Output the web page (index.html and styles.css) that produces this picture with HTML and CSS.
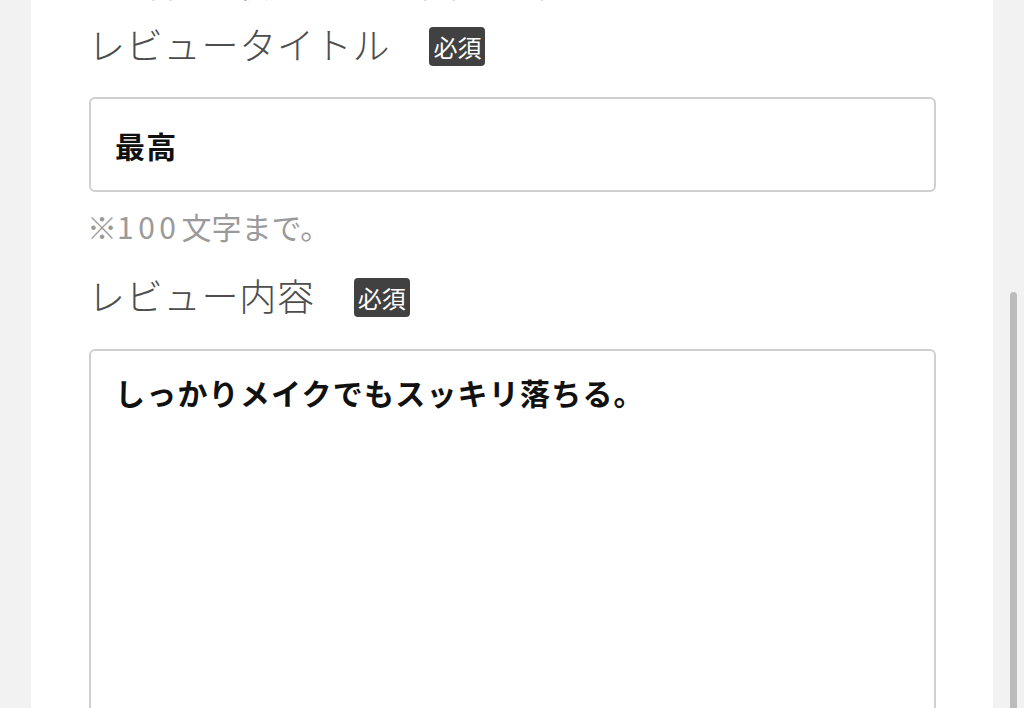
FILE: index.html
```html
<!DOCTYPE html>
<html lang="ja">
<head>
    <meta charset="UTF-8">
    <meta name="viewport" content="width=device-width, initial-scale=1.0">
    <title>レビュー投稿</title>
    <link rel="stylesheet" href="styles.css">
</head>
<body>
    <!-- レビューフォーム -->
    <main class="page">
        <p class="prev-note">※商品の使用感などを自由にご記入ください</p>

        <div class="field-label">
            <span class="label-text">レビュータイトル</span>
            <span class="badge">必須</span>
        </div>
        <input class="text-input" type="text" value="最高" readonly>
        <p class="note">※<span class="num">100</span>文字まで。</p>

        <div class="field-label">
            <span class="label-text">レビュー内容</span>
            <span class="badge">必須</span>
        </div>
        <textarea class="text-area" readonly>しっかりメイクでもスッキリ落ちる。</textarea>
    </main>

    <!-- スクロールバー -->
    <div class="scroll-thumb"></div>
</body>
</html>
```

FILE: styles.css
```css
/* 基本スタイル */
body {
    margin: 0;
    padding: 0;
    height: 708px;
    overflow: hidden;
    background: #f2f2f2;
    font-family: "Noto Sans CJK JP", "Noto Sans", sans-serif;
}
.page {
    width: 846px;
    margin-left: 31px;
    padding: 0 58px;
    background: white;
    min-height: 708px;
}
.prev-note {
    margin: -36px 0 0 30px;
    font-size: 30px;
    line-height: 40px;
    color: #666;
}
.field-label {
    display: flex;
    align-items: center;
    height: 40px;
    margin-top: 22px;
    margin-left: -1px;
}
.label-text {
    font-size: 37px;
    font-weight: 300;
    letter-spacing: 0.8px;
    color: #4d4d4d;
    line-height: 40px;
    padding-bottom: 4px;
}
.badge {
    margin-left: 39px;
    padding: 0 4px;
    height: 39px;
    line-height: 39px;
    font-size: 24px;
    color: white;
    background: #414141;
    border-radius: 4px;
}
.text-input,
.text-area {
    display: block;
    box-sizing: border-box;
    width: 847px;
    margin: 31px 0 0;
    border: 2px solid #d0d0d0;
    border-radius: 6px;
    background: white;
    font-family: inherit;
    font-size: 30px;
    font-weight: bold;
    letter-spacing: 1.2px;
    color: #111;
    outline: none;
}
.text-input {
    height: 95px;
    padding: 0 24px;
}
.text-area {
    height: 420px;
    margin-top: 32px;
    padding: 19px 24px;
    line-height: 45px;
    resize: none;
    overflow: hidden;
}
.note {
    margin: 14px 0 0 -2px;
    font-size: 30px;
    line-height: 40px;
    color: #9a9a9a;
}
.note .num {
    letter-spacing: 4.5px;
    margin-right: 1px;
}
.note + .field-label {
    margin-top: 31px;
}
.scroll-thumb {
    position: absolute;
    left: 1010px;
    top: 292px;
    width: 7px;
    height: 430px;
    background: #bbbbbb;
    border-radius: 4px;
}
```
